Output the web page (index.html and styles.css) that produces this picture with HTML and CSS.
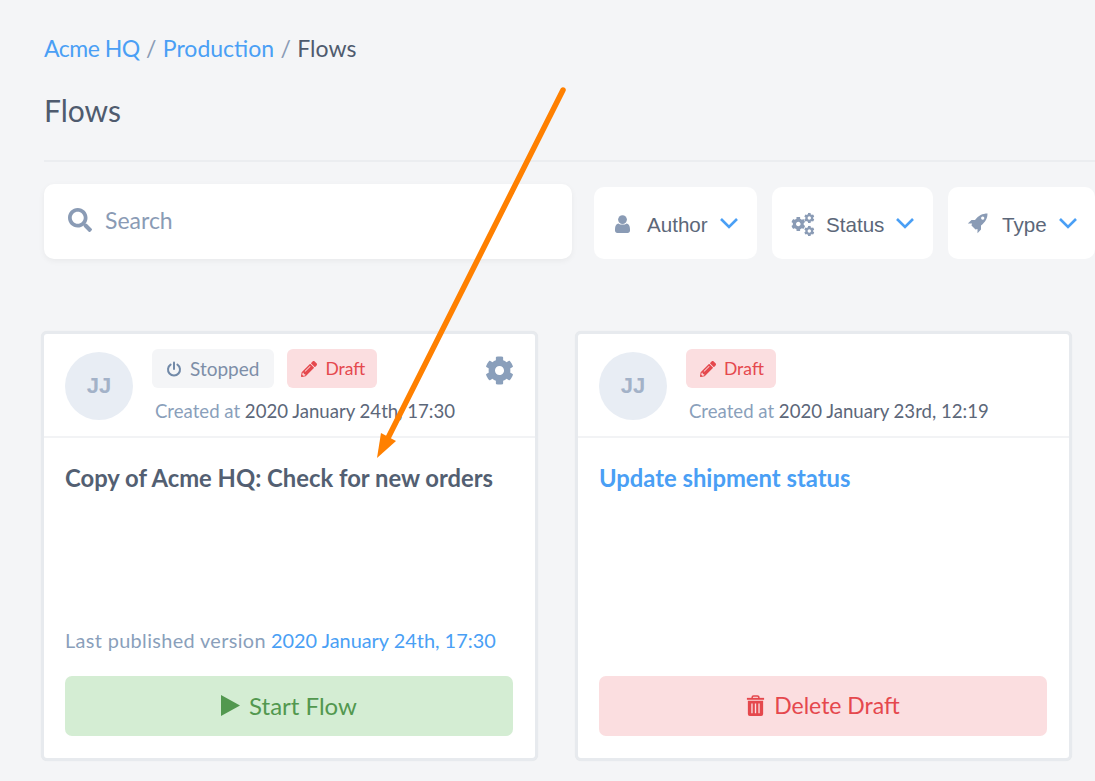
FILE: index.html
```html
<!DOCTYPE html>
<html lang="en">
<head>
    <meta charset="UTF-8">
    <meta name="viewport" content="width=device-width, initial-scale=1.0">
    <title>Flows</title>
    <link rel="stylesheet" href="styles.css">
</head>
<body>
    <svg width="0" height="0" class="defs">
        <symbol id="cog" viewBox="0 0 512 512">
            <path d="M487.4 315.7l-42.6-24.6c4.3-23.2 4.3-47 0-70.2l42.6-24.6c4.9-2.8 7.1-8.6 5.5-14-11.1-35.6-30-67.8-54.7-94.6-3.8-4.1-10-5.1-14.8-2.3L380.8 110c-17.9-15.4-38.5-27.3-60.8-35.1V25.8c0-5.6-3.9-10.5-9.4-11.7-36.7-8.2-74.3-7.8-109.2 0-5.5 1.2-9.4 6.1-9.4 11.7V75c-22.2 7.9-42.8 19.8-60.8 35.1L88.7 85.5c-4.9-2.8-11-1.9-14.8 2.3-24.7 26.7-43.6 58.9-54.7 94.6-1.7 5.4.6 11.2 5.5 14L67.3 221c-4.3 23.2-4.3 47 0 70.2l-42.6 24.6c-4.9 2.8-7.1 8.6-5.5 14 11.1 35.6 30 67.8 54.7 94.6 3.8 4.1 10 5.1 14.8 2.3l42.6-24.6c17.9 15.4 38.5 27.3 60.8 35.1v49.2c0 5.6 3.9 10.5 9.4 11.7 36.7 8.2 74.3 7.8 109.2 0 5.5-1.2 9.4-6.1 9.4-11.7v-49.2c22.2-7.9 42.8-19.8 60.8-35.1l42.6 24.6c4.9 2.8 11 1.9 14.8-2.3 24.7-26.7 43.6-58.9 54.7-94.6 1.5-5.5-.7-11.3-5.6-14.1zM256 336c-44.1 0-80-35.9-80-80s35.9-80 80-80 80 35.9 80 80-35.9 80-80 80z"/>
        </symbol>
        <symbol id="pencil" viewBox="0 0 512 512">
            <path d="M497.9 142.1l-46.1 46.1c-4.7 4.7-12.3 4.7-17 0l-111-111c-4.7-4.7-4.7-12.3 0-17l46.1-46.1c18.7-18.7 49.1-18.7 67.9 0l60.1 60.1c18.8 18.7 18.8 49.1 0 67.9zM284.2 99.8L21.6 362.4.4 483.9c-2.9 16.4 11.4 30.6 27.8 27.8l121.5-21.3 262.6-262.6c4.7-4.7 4.7-12.3 0-17l-111-111c-4.8-4.7-12.4-4.7-17.1 0zM124.1 339.9c-5.5-5.5-5.5-14.3 0-19.8l154-154c5.5-5.5 14.3-5.5 19.8 0s5.5 14.3 0 19.8l-154 154c-5.5 5.5-14.3 5.5-19.8 0zM88 424h48v36.3l-64.5 11.3-31.1-31.1L51.7 376H88v48z"/>
        </symbol>
    </svg>

    <nav class="crumbs">
        <a class="org" href="#">Acme HQ</a> <span class="sep">/</span> <a href="#">Production</a> <span class="sep">/</span> <span class="here">Flows</span>
    </nav>
    <h1 class="title">Flows</h1>
    <div class="rule"></div>

    <div class="toolbar">
        <div class="search">
            <svg class="search-icon" viewBox="0 0 512 512"><path d="M505 442.7L405.3 343c-4.5-4.5-10.6-7-17-7H372c27.6-35.3 44-79.7 44-128C416 93.1 322.9 0 208 0S0 93.1 0 208s93.1 208 208 208c48.3 0 92.7-16.4 128-44v16.3c0 6.4 2.5 12.5 7 17l99.7 99.7c9.4 9.4 24.6 9.4 33.9 0l28.3-28.3c9.4-9.4 9.4-24.6.1-34zM208 336c-70.7 0-128-57.2-128-128 0-70.7 57.2-128 128-128 70.7 0 128 57.2 128 128 0 70.7-57.2 128-128 128z"/></svg>
            <span>Search</span>
        </div>
        <div class="filter filter-author">
            <svg class="filter-icon" viewBox="0 0 15 18"><circle cx="7.5" cy="4.6" r="4.4"/><path d="M0 14c0-3.6 1.6-5.4 3.4-5.6 1 .8 2.5 1.2 4.1 1.2s3.1-.4 4.1-1.2C13.4 8.6 15 10.4 15 14v1.6C15 17 14 18 12.6 18H2.4C1 18 0 17 0 15.6z"/></svg>
            <span class="filter-name">Author</span>
            <svg class="chevron" viewBox="0 0 20 12"><polyline points="2,2 10,10 18,2"/></svg>
        </div>
        <div class="filter filter-status">
            <svg class="filter-icon cogs" viewBox="0 0 24 24">
                <use href="#cog" x="0" y="4.7" width="14.6" height="14.6"/>
                <use href="#cog" x="13" y="0.7" width="10.6" height="10.6"/>
                <use href="#cog" x="13" y="13.7" width="10.6" height="10.6"/>
            </svg>
            <span class="filter-name">Status</span>
            <svg class="chevron" viewBox="0 0 20 12"><polyline points="2,2 10,10 18,2"/></svg>
        </div>
        <div class="filter filter-type">
            <svg class="filter-icon" viewBox="0 0 21 21"><path fill-rule="evenodd" d="M20.5.5C15.5.5 11.5 2.5 8 7H4.5L.8 10.5H5L4.5 12.5l4 4 2-.5v4.200l3.500-3.700v-4C18.500 9 20.500 5.500 20.500.5zM15.700 3.500a1.600 1.600 0 1 0 .01 0z"/></svg>
            <span class="filter-name">Type</span>
            <svg class="chevron" viewBox="0 0 20 12"><polyline points="2,2 10,10 18,2"/></svg>
        </div>
    </div>

    <div class="cards">
        <div class="card">
            <div class="card-head">
                <div class="avatar">JJ</div>
                <div class="meta">
                    <div class="badges">
                        <span class="badge badge-grey">
                            <svg class="badge-icon power" viewBox="0 0 16 16"><path d="M4.6 3.6a6 6 0 1 0 6.8 0"/><line x1="8" y1="1.5" x2="8" y2="8"/></svg>
                            Stopped
                        </span>
                        <span class="badge badge-red">
                            <svg class="badge-icon"><use href="#pencil"/></svg>
                            Draft
                        </span>
                    </div>
                    <div class="created">Created at <span class="date">2020 January 24th, 17:30</span></div>
                </div>
                <svg class="settings"><use href="#cog"/></svg>
            </div>
            <div class="card-body">
                <a class="flow-name" href="#">Copy of Acme HQ: Check for new orders</a>
                <div class="published"><span class="published-label">Last published version</span> <a href="#">2020 January 24th, 17:30</a></div>
                <div class="action action-green">
                    <svg class="action-icon" viewBox="0 0 20 22"><polygon points="0,0 20,11 0,22"/></svg>
                    Start Flow
                </div>
            </div>
        </div>

        <div class="card">
            <div class="card-head">
                <div class="avatar">JJ</div>
                <div class="meta">
                    <div class="badges">
                        <span class="badge badge-red">
                            <svg class="badge-icon"><use href="#pencil"/></svg>
                            Draft
                        </span>
                    </div>
                    <div class="created">Created at <span class="date">2020 January 23rd, 12:19</span></div>
                </div>
            </div>
            <div class="card-body">
                <a class="flow-name flow-link" href="#">Update shipment status</a>
                <div class="action action-red">
                    <svg class="action-icon" viewBox="0 0 18 22">
                        <path d="M1 6h16v14a2 2 0 0 1-2 2H3a2 2 0 0 1-2-2zM4.6 9v10h1.4V9zM8.3 9v10h1.4V9zM12 9v10h1.4V9z" fill-rule="evenodd"/>
                        <rect x="0" y="3" width="18" height="2"/>
                        <path d="M5.5 4V2.500A1.500 1.500 0 0 1 7 1h4a1.500 1.500 0 0 1 1.500 1.500V4" fill="none" stroke="currentColor" stroke-width="1.6"/>
                    </svg>
                    Delete Draft
                </div>
            </div>
        </div>
    </div>

    <svg class="arrow" viewBox="0 0 1095 781">
        <line x1="563" y1="90" x2="387" y2="440"/>
        <polygon points="377,458 381,433 396,441"/>
    </svg>
</body>
</html>
```

FILE: styles.css
```css
html, body {
    height: 781px;
    overflow: hidden;
}
body {
    margin: 0;
    padding: 0 0 0 44px;
    position: relative;
    background-color: #f4f5f7;
    color: #4f5b6e;
    font-family: Lato, "Open Sans", sans-serif;
}
a {
    color: #4a9ff5;
    text-decoration: none;
}
.defs {
    position: absolute;
}
.crumbs {
    padding-top: 34px;
    height: 28px;
    line-height: 28px;
    font-size: 23px;
}
.crumbs .org {
    letter-spacing: -0.5px;
}
.crumbs .sep {
    color: #8a9bb5;
    margin: 0 0.5px;
}
.crumbs .here {
    color: #4f5b6e;
}
.title {
    margin: 27px 0 0;
    height: 71px;
    line-height: 42px;
    font-size: 30px;
    font-weight: 400;
}
.rule {
    height: 2px;
    background-color: #ebedf0;
    margin-bottom: 22px;
}
.toolbar {
    display: flex;
    align-items: flex-end;
    height: 75px;
    font-family: "Liberation Sans", Arial, sans-serif;
}
.search {
    width: 528px;
    height: 75px;
    box-sizing: border-box;
    padding: 0 0 4px 24px;
    display: flex;
    align-items: center;
    gap: 13px;
    background-color: #fff;
    border-radius: 10px;
    box-shadow: 0 2px 6px rgba(0, 0, 0, 0.05);
    color: #8a9bb5;
    font-family: Lato, "Open Sans", sans-serif;
    font-size: 23px;
}
.search-icon {
    width: 24px;
    height: 24px;
    fill: #8a9bb5;
}
.filter {
    height: 72px;
    box-sizing: border-box;
    display: flex;
    align-items: center;
    background-color: #fff;
    border-radius: 10px;
    font-size: 20.6px;
    color: #5c6779;
}
.filter-name {
    padding-top: 3px;
}
.filter-author {
    width: 163px;
    margin-left: 22px;
    padding-left: 21px;
}
.filter-status {
    width: 161px;
    margin-left: 15px;
    padding-left: 19px;
}
.filter-type {
    width: 147px;
    margin-left: 15px;
    padding-left: 19px;
}
.filter-icon {
    width: 15px;
    height: 18px;
    fill: #8a9bb5;
    margin: 1px 17px 0 0;
}
.filter-icon.cogs {
    width: 24px;
    height: 24px;
    margin-right: 11px;
}
.filter-type .filter-icon {
    width: 21px;
    height: 21px;
    margin-right: 14px;
}
.chevron {
    width: 20px;
    height: 12px;
    margin-left: 11px;
    fill: none;
    stroke: #4a9ff5;
    stroke-width: 2.6;
}
.cards {
    display: flex;
    gap: 37px;
    margin: 72px 0 0 -3px;
}
.card {
    width: 497px;
    height: 430px;
    box-sizing: border-box;
    background-color: #fff;
    border: 3px solid #e7eaee;
    border-radius: 6px;
    box-shadow: 0 0 1px rgba(0, 0, 0, 0.08);
    display: flex;
    flex-direction: column;
}
.card-head {
    height: 104px;
    box-sizing: border-box;
    display: flex;
    padding: 15px 0 0 21px;
    border-bottom: 2px solid #f2f3f5;
    position: relative;
}
.avatar {
    width: 68px;
    height: 68px;
    margin-top: 3px;
    flex: none;
    border-radius: 50%;
    background-color: #e8edf4;
    color: #a3b2c8;
    font: bold 22px/68px "Liberation Sans", Arial, sans-serif;
    text-align: center;
}
.meta {
    margin-left: 19px;
}
.badges {
    display: flex;
    gap: 13px;
}
.badge {
    height: 39px;
    box-sizing: border-box;
    padding: 0 15px 0 14px;
    display: flex;
    align-items: center;
    border-radius: 6px;
    font-size: 19px;
}
.badge-grey {
    background-color: #f4f5f7;
    color: #7d8ea8;
}
.badge-red {
    padding-right: 12px;
    background-color: #fbdee0;
    color: #e5484d;
    font-size: 17.5px;
}
.badge-icon {
    width: 16px;
    height: 16px;
    margin-right: 8px;
    fill: currentColor;
}
.badge-icon.power {
    fill: none;
    stroke: #7189a8;
    stroke-width: 2;
    stroke-linecap: round;
}
.created {
    margin: 11px 0 0 3px;
    line-height: 24px;
    font-size: 18.6px;
    color: #8a9fbb;
    white-space: nowrap;
}
.created .date {
    color: #5c6779;
}
.settings {
    position: absolute;
    left: 441px;
    top: 22px;
    width: 29px;
    height: 29px;
    fill: #8a9fbb;
}
.card-body {
    flex: 1;
    padding: 26px 22px 22px 21px;
    display: flex;
    flex-direction: column;
}
.flow-name {
    line-height: 28px;
    font-size: 23.8px;
    font-weight: 700;
    color: #535f72;
}
.flow-name.flow-link {
    color: #4a9ff5;
}
.published {
    margin-top: auto;
    line-height: 24px;
    font-size: 19.9px;
    color: #8a9fbb;
}
.published-label {
    letter-spacing: 0.35px;
}
.action {
    margin-top: 24px;
    height: 60px;
    flex: none;
    box-sizing: border-box;
    padding-bottom: 2px;
    display: flex;
    align-items: center;
    justify-content: center;
    border-radius: 7px;
    font-size: 24px;
}
.card-body > .flow-name + .action {
    margin-top: auto;
}
.action-green {
    background-color: #d4edd3;
    color: #52984f;
}
.action-red {
    background-color: #fbdee0;
    color: #e5484d;
    font-size: 23px;
}
.action-icon {
    width: 19px;
    height: 21px;
    margin-right: 9px;
    fill: currentColor;
}
.arrow {
    position: absolute;
    left: 0;
    top: 0;
    width: 1095px;
    height: 781px;
    fill: #ff8000;
    stroke: #ff8000;
    stroke-linecap: round;
    stroke-width: 5.5;
    pointer-events: none;
}
.arrow polygon {
    stroke: none;
}
```
